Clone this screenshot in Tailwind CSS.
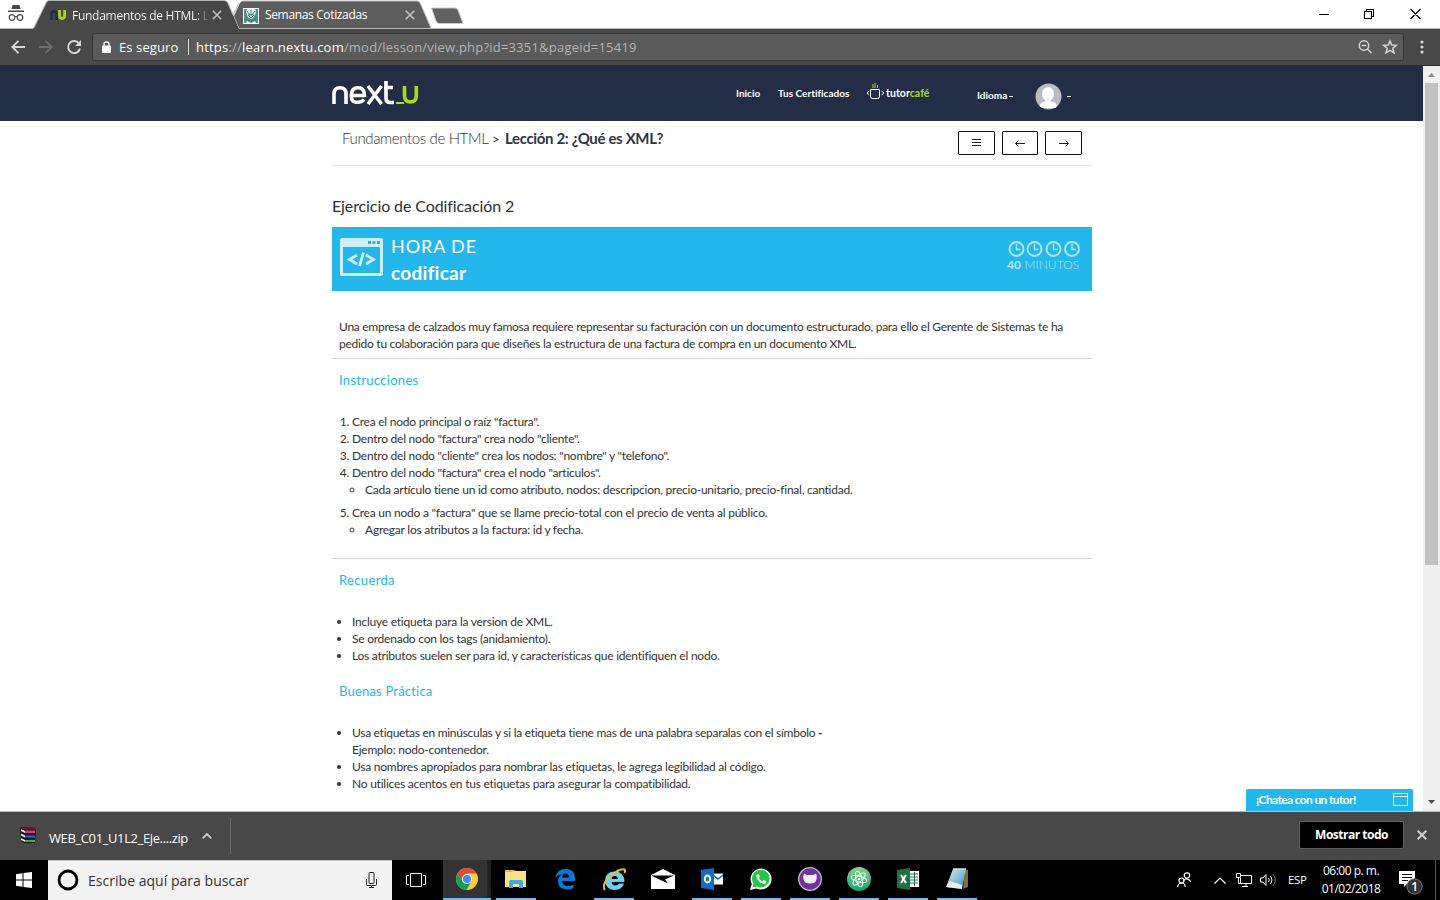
<!DOCTYPE html>
<html lang="es">
<head>
<meta charset="utf-8">
<title>Fundamentos de HTML</title>
<script src="https://cdn.jsdelivr.net/npm/@tailwindcss/browser@4"></script>
</head>
<body class="w-[1440px] h-[900px] overflow-hidden bg-white flex flex-col font-['Open_Sans',sans-serif] whitespace-nowrap">

<!-- Tab strip -->
<header class="relative h-[29px] shrink-0 bg-white flex items-center">
  <svg class="absolute left-0 top-0" width="1440" height="29">
    <rect y="28" width="1440" height="1" fill="#b4b8b7"/>
    <path d="M239 28 L234 16 L240 3 Q241 1 243 1 H417 Q419 1 420 3 L431 28Z" fill="#5d5d5d"/>
    <path d="M240 3 Q241 1 243 1 H417 Q419 1 420 3 L431 28" fill="none" stroke="#b4b8b7"/>
    <path d="M33 29 L46 3 Q47 .5 49 .5 H224 Q227 .5 228 3 L239 29Z" fill="#484848"/>
    <path d="M227 1 L233 15 L240 1Z" fill="#fff"/><path d="M34 28 L46 3 Q47 .5 49 .5 H224 Q227 .5 228 3 L233 15 L239 3" fill="none" stroke="#b4b8b7"/>
    <path d="M431.500 8 H455 Q457 8 458 10 L463 23.500 H439 Q437 23.500 436 21Z" fill="#606060" stroke="#c8c8c8"/>
  </svg>
  <div class="relative flex items-center w-full h-7">
    <svg class="ml-2 -mt-[2px]" width="16" height="17" viewBox="0 0 16 17"><path d="M4.500 0h7l1 4h-9z" fill="#484848"/><rect y="5.500" width="16" height="1.500" fill="#484848"/><g fill="none" stroke="#484848" stroke-width="1.200"><circle cx="4" cy="12.500" r="2.800"/><circle cx="12" cy="12.500" r="2.800"/><path d="M6.500 12q1.500-1 3 0"/></g></svg>
    <svg class="ml-[26px]" width="16" height="10" viewBox="0 0 16 10" fill="none" stroke-width="2.800"><path d="M1.500 10V4Q1.500 1.500 4 1.500Q6.500 1.500 6.500 4V10" stroke="#222d45"/><path d="M9.500 0V5.500Q9.500 8.500 12 8.500Q14.600 8.500 14.600 5.500V0" stroke="#a5d61e"/></svg>
    <div class="ml-[6px] w-[133px] -mt-[2px]"><span class="text-[12px] tracking-[-0.27px] bg-linear-to-r from-white from-90% to-[#505050] to-100% bg-clip-text text-transparent">Fundamentos de HTML: L</span></div>
    <svg class="ml-[7px] mt-[1px]" width="10" height="10" viewBox="0 0 9 9" stroke="#c0c0c0" stroke-width="1.400"><path d="M.7.700l7.600 7.600M8.300.700L.7 8.300"/></svg>
    <svg class="ml-[21px] mt-[2px]" width="16" height="16" viewBox="0 0 16 16"><rect width="16" height="16" fill="#f3f8f6"/><path d="M1 1h3l-1 3 2 5 3 2 3-2 2-5-1-3h3v14h-2l-1-2-4 2-4-2-1 2H1z" fill="#4f8f85"/><path d="M4 3l3 4M8 2v5M12 3L9 7M5 7h6l-3 3zM3 11q5 4 10 0" stroke="#33766c" fill="none"/></svg>
    <div class="ml-[6px] w-[120px] text-[12px] text-white tracking-[-0.35px]">Semanas Cotizadas</div>
    <svg class="ml-[20px] mt-[1px]" width="10" height="10" viewBox="0 0 9 9" stroke="#c0c0c0" stroke-width="1.400"><path d="M.7.700l7.600 7.600M8.300.700L.7 8.300"/></svg>
    <div class="grow"></div>
    <svg class="mr-[19px] -mt-[2px]" width="102" height="12" viewBox="0 0 102 12" fill="none" stroke="#000"><path d="M0 6.500H10M45.500 3.500h7v7h-7zM47.500 3.500v-2h7v7h-2M91.500 1l10 10M101.500 1l-10 10" stroke-width="1.100"/></svg>
  </div>
</header>

<!-- Toolbar -->
<div class="h-[37px] shrink-0 bg-[#484848] border-b border-[#2e2e2e] flex items-center">
  <svg class="ml-[11px]" width="72" height="16" viewBox="0 0 72 16" fill="none" stroke-width="1.900"><path d="M14 8H1.500M7.500 1.800L1.300 8l6.200 6.200" stroke="#d8d8d8"/><path d="M28 8h12.500M34.500 1.800L40.700 8l-6.200 6.200" stroke="#6d6d6d"/><path d="M68 4.500A6 6 0 1 0 69 9.500" stroke="#d8d8d8"/><path d="M70 1v6h-6z" fill="#d8d8d8"/></svg>
  <div class="ml-[9px] w-[1312px] h-[28px] rounded-[3px] border border-[#383838] bg-[#5a5a5a] flex items-center">
    <svg class="ml-[9px] -mt-px" width="9" height="12" viewBox="0 0 9 12"><rect y="4.500" width="9" height="7.500" rx="1" fill="#fff"/><path d="M2 5V3Q2 1 4.500 1T7 3V5" stroke="#fff" stroke-width="1.300" fill="none"/></svg>
    <div class="ml-[8px] mt-px w-[69px] text-[13px] text-white tracking-[0.1px]">Es seguro</div>
    <div class="w-px h-4 bg-[#ddd]"></div>
    <div class="ml-[7px] mt-px text-[13px] text-[#b5b5b5] tracking-[0.21px]"><span class="text-white">https</span>://<span class="text-white">learn.nextu.com</span>/mod/lesson/view.php?id=3351&amp;pageid=15419</div>
    <div class="grow"></div>
    <svg class="mr-[5px]" width="40" height="16" viewBox="0 0 40 16" fill="none" stroke="#d5d5d5" stroke-width="1.500"><circle cx="6" cy="6.500" r="4.700"/><path d="M9.500 10l4 4M3.700 6.500h4.600"/><path d="M32 2l1.700 4 4.600.3-3.500 3 1.200 4.500-4-2.500-4 2.500 1.200-4.500-3.500-3 4.600-.3z"/></svg>
  </div>
  <svg class="ml-[16px]" width="4" height="14" fill="#d5d5d5"><circle cx="2" cy="2" r="1.600"/><circle cx="2" cy="7" r="1.600"/><circle cx="2" cy="12" r="1.600"/></svg>
</div>

<!-- Page viewport -->
<div class="relative h-[745px] shrink-0 flex">
  <main class="w-[1423px] font-['Lato',sans-serif] text-[#2b2f36]">
    <nav class="h-[55px] bg-[#232e46] pl-[332px] flex items-start text-white font-bold text-[10px]">
      <svg class="mt-[14px]" width="87" height="25" viewBox="0 0 87 25" fill="none" stroke="#fff" stroke-width="3.600"><path d="M2 24V14Q2 7.800 8 7.800T14 14V24M19.500 15.500H32.500Q32.500 7.800 26 7.800T19.300 15.500T26 22.200Q30 22.200 32 19.500M36 6l13.500 18M49.500 6L36 24M54 1V18Q54 22.500 58 22.500H62M52 7.500H61"/><path d="M64 23H72" stroke="#a5dc20" stroke-width="2"/><path d="M72.500 6V15Q72.500 22 78.500 22T84.300 15V6" stroke="#a5dc20"/></svg>
      <div class="mt-[20px] ml-[317px] leading-[15px] w-[42px]">Inicio</div>
      <div class="mt-[20px] leading-[15px] w-[88px] tracking-[0.01px]">Tus Certificados</div>
      <svg class="mt-[17px]" width="19" height="18" viewBox="0 0 19 18" fill="none" stroke="#fff"><path d="M4.500 6.500h9v7q0 2-2 2h-5q-2 0-2-2zM3 8L1 10l2 2M15.500 8l2.500 2-2.500 2"/><path d="M7 1v4M9 0v5M11.500 2v3" stroke="#a5dc20"/></svg>
      <div class="mt-[20px] ml-[1px] w-[91px] leading-[15px] text-[10.5px] tracking-[0.05px]">tutor<span class="text-[#a5dc20]">café</span></div>
      <div class="mt-[22px] leading-[15px] w-[58px]">Idioma <span class="inline-block w-1 h-px bg-white align-[2px] -ml-px"></span></div>
      <svg class="mt-[17px]" width="27" height="27" viewBox="0 0 27 27"><clipPath id="av"><circle cx="13.500" cy="13.500" r="13"/></clipPath><g clip-path="url(#av)"><rect width="27" height="27" fill="#b9bdc1"/><ellipse cx="13" cy="11" rx="6" ry="7" fill="#fff"/><path d="M4 25Q5 19 10 18.500V15h6v3.500Q22 19 23 25z" fill="#fff"/></g></svg>
      <div class="mt-[30px] ml-[5px] w-1 h-px bg-white"></div>
    </nav>
    <div class="ml-[332px] w-[760px]">
      <div class="h-[45px] border-b border-[#e8e8e8] flex items-start text-[15px] leading-[20px]">
        <div class="mt-[7px] ml-[10px] w-[150px] font-light tracking-[-0.36px]">Fundamentos de HTML</div>
        <div class="mt-[8px] w-[13px] text-[13px]">&gt;</div>
        <div class="mt-[7px] font-bold text-[#2c3645] tracking-[-0.35px]">Lección 2: ¿Qué es XML?</div>
        <div class="grow"></div>
        <div class="mt-[10px] mr-[10px] flex gap-[7px]">
          <div class="w-[37px] h-[24px] border border-[#111] rounded-[1px] flex items-center justify-center"><svg width="9" height="8" stroke="#222"><path d="M0 .5h9M0 3.500h9M0 6.500h9"/></svg></div>
          <div class="w-[36px] h-[24px] border border-[#111] rounded-[1px] flex items-center justify-center"><svg width="10" height="7" stroke="#222" fill="none"><path d="M10 3.500H.5M3.500.5l-3 3 3 3"/></svg></div>
          <div class="w-[37px] h-[24px] border border-[#111] rounded-[1px] flex items-center justify-center"><svg width="10" height="7" stroke="#222" fill="none"><path d="M0 3.500h9.500M6.500.5l3 3-3 3"/></svg></div>
        </div>
      </div>
      <h1 class="mt-[30px] h-[31px] leading-[20px] text-[16px] tracking-[-0.1px]">Ejercicio de Codificación 2</h1>
      <section class="h-[64px] bg-[#24b7ec] text-white flex items-start">
        <svg class="ml-[8px] mt-[11px]" width="43" height="38" viewBox="0 0 43 38"><path d="M2 0h39q2 0 2 2v34q0 2-2 2H2q-2 0-2-2V2q0-2 2-2zM3 9v26h37V9z" fill="#d0effb" fill-rule="evenodd"/><path d="M28 3h3v3h-3zM32.500 3h3v3h-3zM37 3h3v3h-3z" fill="#24b7ec"/><path d="M17 17l-7.500 4.500L17 26M26 17l7.500 4.500L26 26M23.500 14.500l-4 13.500" stroke="#d0effb" stroke-width="2.800" fill="none"/></svg>
        <div class="ml-[8px] mt-[6px] w-[600px] text-[18px] leading-[27px]"><div class="tracking-[0.9px]">HORA DE</div><div class="font-bold leading-[25px] text-[19px] tracking-[0.25px]">codificar</div></div>
        <div class="ml-[16px] mt-[14px] text-[#b5e6f9]">
          <svg width="73" height="16" viewBox="0 0 73 16" fill="none" stroke="#b5e6f9" stroke-width="1.900"><circle cx="9.500" cy="8" r="7"/><circle cx="27.500" cy="8" r="7"/><circle cx="46.500" cy="8" r="7"/><circle cx="65" cy="8" r="7"/><path d="M9.500 3v5.500h4M27.500 3v5.500h4M46.500 3v5.500h4M65 3v5.500h4" stroke-width="1.400"/></svg>
          <div class="text-[12px] leading-[16px] font-light tracking-[0.1px]"><b class="font-bold">40</b> MINUTOS</div>
        </div>
      </section>
      <div class="text-[12px] leading-[17px] text-[#333] tracking-[-0.24px]">
        <div class="mt-[27px] h-[41px] border-b border-[#d4d4d4] pl-[7px] tracking-[-0.27px]">Una empresa de calzados muy famosa requiere representar su facturación con un documento estructurado, para ello el Gerente de Sistemas te ha<br>pedido tu colaboración para que diseñes la estructura de una factura de compra en un documento XML.</div>
        <h2 class="mt-[13px] pl-[7px] text-[13px] text-[#24b7ec] tracking-[0.3px]">Instrucciones</h2>
        <ol class="mt-[24px] h-[146px] pl-[20px] list-decimal border-b border-[#d4d4d4]">
          <li>Crea el nodo principal o raíz "factura".</li>
          <li>Dentro del nodo "factura" crea nodo "cliente".</li>
          <li>Dentro del nodo "cliente" crea los nodos: "nombre" y "telefono".</li>
          <li>Dentro del nodo "factura" crea el nodo "articulos".
            <ul class="pl-[13px] pb-[6px] list-[circle]"><li>Cada artículo tiene un id como atributo, nodos: descripcion, precio-unitario, precio-final, cantidad.</li></ul></li>
          <li>Crea un nodo a "factura" que se llame precio-total con el precio de venta al público.
            <ul class="pl-[13px] list-[circle]"><li>Agregar los atributos a la factura: id y fecha.</li></ul></li>
        </ol>
        <h2 class="mt-[13px] pl-[7px] text-[13px] text-[#24b7ec] tracking-[0.35px]">Recuerda</h2>
        <ul class="mt-[24px] pl-[20px] list-disc">
          <li>Incluye etiqueta para la version de XML.</li>
          <li>Se ordenado con los tags (anidamiento).</li>
          <li>Los atributos suelen ser para id, y características que identifiquen el nodo.</li>
        </ul>
        <h2 class="mt-[19px] pl-[7px] text-[13px] text-[#24b7ec] tracking-[0.2px]">Buenas Práctica</h2>
        <ul class="mt-[24px] pl-[20px] list-disc">
          <li><span class="tracking-[-0.29px]">Usa etiquetas en minúsculas y si la etiqueta tiene mas de una palabra separalas con el símbolo <b>-</b></span><br>Ejemplo: nodo-contenedor.</li>
          <li>Usa nombres apropiados para nombrar las etiquetas, le agrega legibilidad al código.</li>
          <li>No utilices acentos en tus etiquetas para asegurar la compatibilidad.</li>
        </ul>
      </div>
    </div>
  </main>
  <!-- Scrollbar -->
  <div class="w-[17px] bg-[#f0f0f0] flex flex-col items-center">
    <svg width="17" height="17"><path d="M5 11h7L8.500 7z" fill="#8c8c8c"/></svg>
    <div class="w-[13px] h-[482px] bg-[#c1c1c1]"></div>
    <div class="grow"></div>
    <svg width="17" height="17"><path d="M5 6h7l-3.500 4z" fill="#4a4a4a"/></svg>
  </div>
  <!-- Chat launcher floating over the page -->
  <div class="absolute left-[1246px] bottom-0 w-[167px] h-[22px] bg-[#24b7ec] rounded-t-[2px] flex items-center justify-between pl-[10px] pr-[5px] text-white font-['Lato',sans-serif] font-bold text-[12px] tracking-[-0.63px]"><span>¡Chatea con un tutor!</span><svg class="-mt-[2px]" width="15" height="13" fill="none" stroke="#fff"><path d="M.5.500h14v12H.5zM.5 3.500h14"/></svg></div>
</div>

<!-- Downloads shelf -->
<div class="h-[49px] shrink-0 bg-[#484848] border-t border-[#b9b9b9] flex items-center text-white">
  <svg class="ml-[20px] -mt-px" width="16" height="17" viewBox="0 0 16 17"><path d="M0 1l3-1h12l1 5-1 11H4L1 14z" fill="#161616"/><path d="M1 1l3-1h11v2.500H4z" fill="#7b1236"/><path d="M5 3.500h10v2.500H5z" fill="#d93a86"/><path d="M5 8.500h10v2H5z" fill="#2c68c4"/><path d="M5 13h10v2H5z" fill="#2eae78"/><path d="M1 2l4 2v2L1 4zM1 6.500l4 2v2l-4-2zM1 11l4 2v2l-4-2z" fill="#eee"/></svg>
  <div class="ml-[13px] mt-[6px] w-[153px] text-[13px] tracking-[-0.38px]">WEB_C01_U1L2_Eje....zip</div>
  <svg class="-mt-px" width="10" height="6" fill="none" stroke="#ccc" stroke-width="1.800"><path d="M.7 5.300L5 1l4.300 4.300"/></svg>
  <div class="ml-[18px] w-px h-9 bg-[#6b6b6b]"></div>
  <div class="grow"></div>
  <div class="w-[105px] h-[28px] -mt-[2px] bg-black border border-[#606060] rounded-[2px] flex items-center justify-center text-[12px] font-bold tracking-[-0.5px]">Mostrar todo</div>
  <svg class="ml-[13px] mr-[13px] -mt-[2px]" width="10" height="10" stroke="#d0d0d0" stroke-width="2"><path d="M.7.700l8.600 8.600M9.300.700L.7 9.300"/></svg>
</div>

<!-- Taskbar -->
<footer class="h-[40px] shrink-0 bg-black flex items-center text-white">
  <div class="w-12 flex justify-center"><svg width="16" height="16" fill="#fff"><path d="M0 2.300L6.500 1.300V7.500H0zM7.500 1.100L16 0V7.500H7.500zM0 8.500H6.500V14.700L0 13.700zM7.500 8.500H16V16L7.500 14.900z"/></svg></div>
  <div class="w-[344px] h-[40px] border-t border-[#c4c4c4] bg-[#f2f2f2] flex items-center text-[#333] text-[14px]">
    <svg class="ml-[9px] -mt-px" width="22" height="22"><circle cx="11" cy="11" r="9" fill="none" stroke="#000" stroke-width="2.800"/></svg>
    <div class="ml-[9px] w-[278px] tracking-[0.03px]">Escribe aquí para buscar</div>
    <svg class="-mt-px" width="11" height="16" fill="none" stroke="#222"><rect x="3" y=".5" width="5" height="11" rx="1"/><path d="M.5 7v5.500q0 1 1 1h8q1 0 1-1V7M5.500 13.500v2M3 15.500h5"/></svg>
  </div>
  <div class="w-[51px] flex pl-[14px]"><svg width="20" height="14" fill="none" stroke="#fff"><path d="M4.500.5h11v13h-11zM3 2.500H.5v9H3M17 2.500h2.500v9H17"/></svg></div>
  <div class="w-[48px] h-[40px] border-b-2 border-[#76b9ed] bg-linear-to-r from-[#333] from-92% to-[#222] to-92% flex items-center justify-center"><svg width="22" height="22" viewBox="0 0 22 22"><circle cx="11" cy="11" r="11" fill="#f9ce45"/><path d="M1.500 5.500A11 11 0 0 1 20.500 5.500H11L6.500 13.500z" fill="#db4b3e"/><path d="M1.500 5.500A11 11 0 0 0 10.500 22L15.500 13.500H6.500z" fill="#149e58"/><circle cx="11" cy="11" r="5" fill="#fff"/><circle cx="11" cy="11" r="4" fill="#4687f4"/></svg></div>
  <div class="ml-[5px] w-[40px] h-[40px] border-b-2 border-[#76b9ed] flex items-center justify-center"><svg width="22" height="20" viewBox="0 0 22 20"><path d="M0 1h9l1 1h11v16H0z" fill="#fbe08a"/><path d="M0 1h9v2H0z" fill="#e9b83d"/><path d="M4 19v-6q0-2 2-2h10q2 0 2 2v6h-4v-4H8v4z" fill="#3fa9e0"/></svg></div>
  <div class="ml-[9px] w-[40px] h-[40px] border-b-2 border-black flex items-center justify-center"><svg width="20" height="22" viewBox="0 0 20 22"><path d="M0 10Q2 1 10.500 1Q20 1 20 10V13H7Q7.500 18 13 18Q16 18 18.500 16.500V20Q16 21.500 12 21.500Q3 21 3 13Q3 9 7 6.500Q2 7 0 10zM7 9.500H14Q14 5.500 10.700 5.500Q7.500 5.500 7 9.500z" fill="#0a78d7" fill-rule="evenodd"/></svg></div>
  <div class="ml-[9px] w-[40px] h-[40px] border-b-2 border-[#76b9ed] flex items-center justify-center"><svg width="23" height="23" viewBox="0 0 23 23"><path d="M2 13Q2 3.500 12 3.500Q21.500 4 21.500 14H8.500Q9 17.500 12 17.500Q15 17.500 16 15.500H21Q19 22 12 22Q3 22 2 13zM8.500 11H15Q14.500 8 11.700 8T8.500 11z" fill="#6bd0f5" fill-rule="evenodd"/><path d="M2 22Q-2 17 7 8.500Q17 0 21.500 1.500Q22.500 2 21.500 5" fill="none" stroke="#f0bb26" stroke-width="2"/></svg></div>
  <div class="ml-[9px] w-[40px] h-[40px] border-b-2 border-black flex items-center justify-center"><svg width="24" height="20" viewBox="0 0 24 20"><path d="M0 6L12 0l12 6v14H0z" fill="#fff"/><path d="M1 6.500H23L14 10.500l3 4L1 7z" fill="#000"/></svg></div>
  <div class="ml-[9px] w-[40px] h-[40px] border-b-2 border-[#76b9ed] flex items-center justify-center"><svg width="22" height="22" viewBox="0 0 22 22"><path d="M12 5.500h10v11H12z" fill="#fff"/><path d="M12 7l5 4 5-4" stroke="#0b70c5" stroke-width="1.500" fill="none"/><path d="M0 2l13-2v22L0 20z" fill="#0b70c5"/><ellipse cx="6.500" cy="11" rx="2.700" ry="3.500" fill="none" stroke="#fff" stroke-width="2"/></svg></div>
  <div class="ml-[9px] w-[40px] h-[40px] border-b-2 border-[#76b9ed] flex items-center justify-center"><svg width="22" height="22" viewBox="0 0 22 22"><path d="M0 22l1.800-6A10.500 10.500 0 1 1 6.500 20.500z" fill="#fff"/><path d="M2.500 19.500l1-4A8.800 8.800 0 1 1 7 18.500z" fill="#27c34a"/><path d="M7.500 6Q6 7 6.500 9Q8.500 14.500 14 16Q16 16 16.500 13.500L13.800 12l-1.500 1.500Q10 12.500 8.800 10l1-1.300L8.700 6z" fill="#fff"/></svg></div>
  <div class="ml-[9px] w-[40px] h-[40px] border-b-2 border-[#76b9ed] flex items-center justify-center"><svg width="24" height="24" viewBox="0 0 24 24"><circle cx="12" cy="12" r="11.300" fill="#6d3596" stroke="#c9b5d5" stroke-width="1.300"/><path d="M6 6.500l3 1.500h6l3-1.500q1.300 2.500 .6 5.500Q18 16.500 12 16.500T5.400 12Q4.700 9 6 6.500z" fill="#f2edf5"/></svg></div>
  <div class="ml-[9px] w-[40px] h-[40px] border-b-2 border-[#76b9ed] flex items-center justify-center"><svg width="24" height="24" viewBox="0 0 24 24"><linearGradient id="at" x2="0" y2="1"><stop stop-color="#8fcf8a"/><stop offset="1" stop-color="#12a275"/></linearGradient><circle cx="12" cy="12" r="12" fill="url(#at)"/><g fill="none" stroke="#e3f5e8" stroke-width="1.100"><ellipse cx="12" cy="12" rx="8" ry="3" transform="rotate(15 12 12)"/><ellipse cx="12" cy="12" rx="8" ry="3" transform="rotate(75 12 12)"/><ellipse cx="12" cy="12" rx="8" ry="3" transform="rotate(135 12 12)"/></g><circle cx="12" cy="12" r="1.300" fill="#fff"/></svg></div>
  <div class="ml-[9px] w-[40px] h-[40px] border-b-2 border-[#76b9ed] flex items-center justify-center"><svg width="22" height="22" viewBox="0 0 22 22"><path d="M12 3h10v16H12z" fill="#fff"/><path d="M13 6h8M13 9h8M13 12h8M13 15h8M17.500 4v14" stroke="#1f7244"/><path d="M0 2l13-2v22L0 20z" fill="#1f7244"/><path d="M4 7l5 8M9 7l-5 8" stroke="#fff" stroke-width="2"/></svg></div>
  <div class="ml-[9px] w-[40px] h-[40px] border-b-2 border-[#76b9ed] flex items-center justify-center"><svg width="22" height="22" viewBox="0 0 22 22"><linearGradient id="np" x2="1" y2="1"><stop stop-color="#d5eef5"/><stop offset="1" stop-color="#3c95b5"/></linearGradient><path d="M19 1l3 1v17l-5 2z" fill="#8a6a3c"/><path d="M7 1h13l-4 20L0 19z" fill="url(#np)"/><path d="M0 19l4-6 12 4v4z" fill="#e8eef0"/><path d="M7 1h13" stroke="#ddd" stroke-width="1.500"/></svg></div>
  <div class="grow"></div>
  <svg width="15" height="16" fill="none" stroke="#fff" stroke-width="1.200"><circle cx="10" cy="3.500" r="2.700"/><path d="M6.500 8.500Q10 4.500 14 10"/><circle cx="4.500" cy="8.500" r="2.500"/><path d="M.7 15Q1 11 4.500 11T8.300 15"/></svg>
  <svg class="ml-[22px]" width="12" height="7" fill="none" stroke="#fff" stroke-width="1.200"><path d="M.5 6.500L6 1l5.500 5.500"/></svg>
  <svg class="ml-[10px]" width="16" height="14" fill="none" stroke="#fff"><path d="M5 2.500h10.500v8H4.500V5M10 10.500v3M6 13.500h6M.5.500h4v4h-4zM2.500 4.500v6h2"/></svg>
  <svg class="ml-[8px]" width="16" height="14" fill="none" stroke="#fff"><path d="M.5 5v4h2.500l3 3.500v-11L3 5zM8.500 5q1.500 2 0 4M10.500 3q3 4 0 8"/><path d="M13 1q4.500 6 0 12" stroke="#777"/></svg>
  <div class="ml-[12px] w-[34px] text-[11.5px] tracking-[-0.3px]">ESP</div>
  <div class="w-[58px] mr-[19px] text-[12px] leading-[18px] tracking-[-0.5px] flex flex-col items-center"><span>06:00 p. m.</span><span>01/02/2018</span></div>
  <svg class="mr-[11px] mt-[6px]" width="25" height="24" viewBox="0 0 25 24"><path d="M0 0h16v13H8l-3 3v-3H0z" fill="#fff"/><path d="M3 3.500h10M3 6.500h10M3 9.500h6" stroke="#000"/><circle cx="15.500" cy="15.500" r="7.700" fill="#333" stroke="#777"/><text x="12.300" y="19.800" fill="#fff" font-size="12" font-weight="600" font-family="Open Sans">1</text></svg>
  <div class="w-px h-full bg-[#555] mr-[4px]"></div>
</footer>
</body>
</html>
